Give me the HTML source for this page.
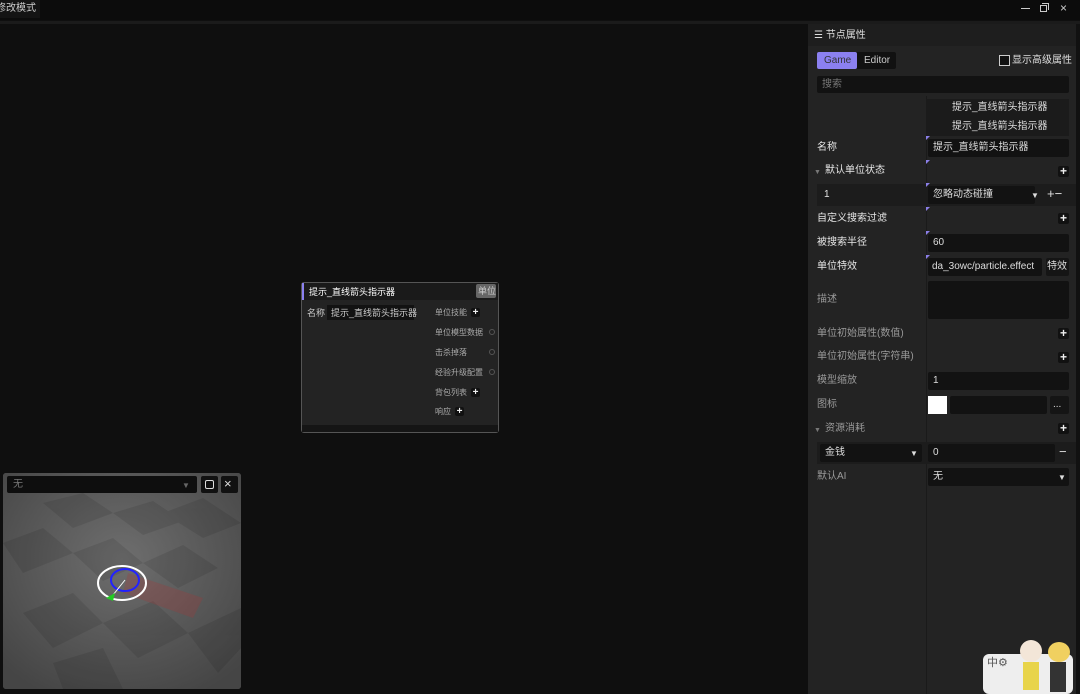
<!DOCTYPE html>
<html><head><meta charset="utf-8"><style>
*{margin:0;padding:0;box-sizing:border-box}
body{width:1080px;height:694px;background:#0f0f0f;overflow:hidden;position:relative;font-family:"Liberation Sans","Noto Sans CJK SC",sans-serif;color:#ddd;font-size:10px;line-height:14px}
.a{position:absolute}
.t{position:absolute;white-space:nowrap}
.in{position:absolute;background:#121212;border-radius:2px}
.plus{position:absolute;width:11px;height:11px;background:#111;color:#eee;font-size:12px;line-height:10px;text-align:center;border-radius:2px;font-weight:bold}
.mk{position:absolute;width:0;height:0;border-top:4px solid #8b7fe8;border-right:4px solid transparent}
.lab{position:absolute;left:817px;font-size:10px;color:#e6e6e6;white-space:nowrap}
.dim{color:#9a9a9a}
</style></head><body>
<div class="a" style="left:0;top:0;width:1080px;height:20px;background:#0c0c0c"></div>
<div class="a" style="left:0;top:0;width:40px;height:18px;background:#141414"></div>
<div class="t" style="left:-4px;top:2px;font-size:10px;color:#ccc">修改模式</div>
<div class="a" style="left:0;top:21px;width:1080px;height:3px;background:#1b1b1b"></div>
<div class="a" style="left:1021px;top:8px;width:9px;height:1px;background:#ccc"></div>
<div class="a" style="left:1040px;top:5px;width:7px;height:7px;border:1px solid #ccc"></div>
<div class="a" style="left:1042px;top:3px;width:7px;height:7px;border-top:1px solid #ccc;border-right:1px solid #ccc"></div>
<div class="t" style="left:1060px;top:1px;font-size:12px;color:#ccc">×</div>

<div class="a" style="left:808px;top:24px;width:272px;height:670px;background:#232323"></div>
<div class="a" style="left:808px;top:24px;width:272px;height:22px;background:#1e1e1e"></div>
<div class="a" style="left:926px;top:96px;width:1px;height:598px;background:#1a1a1a"></div>
<div class="t" style="left:814px;top:29px;font-size:10px;color:#ddd">☰ 节点属性</div>
<div class="a" style="left:817px;top:52px;width:79px;height:17px;background:#111;border-radius:2px"></div>
<div class="a" style="left:817px;top:52px;width:40px;height:17px;background:#8b80f0;border-radius:2px"></div>
<div class="t" style="left:824px;top:54px;color:#333">Game</div>
<div class="t" style="left:864px;top:54px;color:#ccc">Editor</div>
<div class="a" style="left:999px;top:55px;width:11px;height:11px;border:1px solid #ccc;background:#111"></div>
<div class="t" style="left:1012px;top:54px;color:#ddd">显示高级属性</div>
<div class="in" style="left:817px;top:76px;width:252px;height:17px"></div>
<div class="t dim" style="left:822px;top:78px;color:#777">搜索</div>
<div class="a" style="left:926px;top:99px;width:143px;height:37px;background:#1b1b1b"></div>
<div class="t" style="left:952px;top:101px">提示_直线箭头指示器</div>
<div class="t" style="left:952px;top:120px">提示_直线箭头指示器</div>

<div class="mk" style="left:926px;top:136px"></div>
<div class="lab" style="top:141px">名称</div>
<div class="in" style="left:928px;top:139px;width:141px;height:18px"></div>
<div class="t" style="left:933px;top:141px">提示_直线箭头指示器</div>

<div class="mk" style="left:926px;top:160px"></div>
<div class="t" style="left:814px;top:166px;font-size:7px;color:#777">▼</div>
<div class="lab" style="left:825px;top:164px">默认单位状态</div>
<div class="plus" style="left:1058px;top:166px">+</div>

<div class="a" style="left:817px;top:184px;width:262px;height:22px;background:#1c1c1c"></div>
<div class="mk" style="left:926px;top:183px"></div>
<div class="lab" style="left:824px;top:188px">1</div>
<div class="in" style="left:928px;top:186px;width:107px;height:18px"></div>
<div class="t" style="left:933px;top:188px">忽略动态碰撞</div>
<div class="t" style="left:1031px;top:189px;font-size:8px;color:#ddd">▼</div>
<div class="t" style="left:1047px;top:187px;font-size:13px;color:#ddd">+−</div>

<div class="mk" style="left:926px;top:207px"></div>
<div class="lab" style="top:212px">自定义搜索过滤</div>
<div class="plus" style="left:1058px;top:213px">+</div>

<div class="mk" style="left:926px;top:231px"></div>
<div class="lab" style="top:236px">被搜索半径</div>
<div class="in" style="left:928px;top:234px;width:141px;height:18px"></div>
<div class="t" style="left:933px;top:236px">60</div>

<div class="mk" style="left:926px;top:255px"></div>
<div class="lab" style="top:260px">单位特效</div>
<div class="in" style="left:928px;top:258px;width:114px;height:18px"></div>
<div class="t" style="left:932px;top:260px">da_3owc/particle.effect</div>
<div class="in" style="left:1046px;top:258px;width:23px;height:18px;background:#151515"></div>
<div class="t" style="left:1047px;top:260px">特效</div>

<div class="lab dim" style="top:293px">描述</div>
<div class="in" style="left:928px;top:281px;width:141px;height:38px"></div>
<div class="lab dim" style="top:327px">单位初始属性(数值)</div>
<div class="plus" style="left:1058px;top:328px">+</div>
<div class="lab dim" style="top:350px">单位初始属性(字符串)</div>
<div class="plus" style="left:1058px;top:352px">+</div>
<div class="lab dim" style="top:374px">模型缩放</div>
<div class="in" style="left:928px;top:372px;width:141px;height:18px"></div>
<div class="t" style="left:933px;top:374px">1</div>
<div class="lab dim" style="top:398px">图标</div>
<div class="a" style="left:928px;top:396px;width:19px;height:18px;background:#fff"></div>
<div class="in" style="left:950px;top:396px;width:97px;height:18px"></div>
<div class="in" style="left:1050px;top:396px;width:19px;height:18px;background:#151515"></div>
<div class="t" style="left:1053px;top:398px">...</div>
<div class="t" style="left:814px;top:424px;font-size:7px;color:#777">▼</div>
<div class="lab dim" style="left:825px;top:422px">资源消耗</div>
<div class="plus" style="left:1058px;top:423px">+</div>
<div class="a" style="left:817px;top:442px;width:262px;height:22px;background:#1c1c1c"></div>
<div class="in" style="left:820px;top:444px;width:102px;height:18px"></div>
<div class="t" style="left:825px;top:446px">金钱</div>
<div class="t" style="left:910px;top:447px;font-size:8px">▼</div>
<div class="in" style="left:928px;top:444px;width:127px;height:18px"></div>
<div class="t" style="left:933px;top:446px">0</div>
<div class="t" style="left:1059px;top:445px;font-size:13px">−</div>
<div class="lab dim" style="top:470px">默认AI</div>
<div class="in" style="left:928px;top:468px;width:141px;height:18px"></div>
<div class="t" style="left:933px;top:470px">无</div>
<div class="t" style="left:1058px;top:471px;font-size:8px">▼</div>
<div class="a" style="left:1076px;top:24px;width:4px;height:670px;background:#111"></div>

<div class="a" style="left:301px;top:282px;width:198px;height:151px;background:#232323;border:1px solid #555;border-radius:3px"></div>
<div class="a" style="left:302px;top:283px;width:196px;height:17px;background:#1a1a1a"></div>
<div class="a" style="left:302px;top:283px;width:2px;height:17px;background:#8b80f0"></div>
<div class="t" style="left:309px;top:285px;font-size:9px;color:#fff">提示_直线箭头指示器</div>
<div class="a" style="left:476px;top:284px;width:20px;height:14px;background:#666;border-radius:2px"></div>
<div class="t" style="left:478px;top:284px;font-size:9px;color:#ccc">单位</div>
<div class="t" style="left:307px;top:306px;font-size:9px;color:#ccc">名称</div>
<div class="a" style="left:327px;top:305px;width:87px;height:15px;background:#121212"></div>
<div class="t" style="left:331px;top:306px;font-size:9px;color:#ccc">提示_直线箭头指示器</div>
<div class="t" style="left:435px;top:306px;font-size:8px;color:#aaa">单位技能</div>
<div class="plus" style="left:471px;top:308px;width:9px;height:9px;font-size:10px;line-height:9px">+</div>
<div class="t" style="left:435px;top:326px;font-size:8px;color:#aaa">单位模型数据</div>
<div class="a" style="left:489px;top:329px;width:6px;height:6px;border:1px solid #555;border-radius:50%"></div>
<div class="t" style="left:435px;top:346px;font-size:8px;color:#aaa">击杀掉落</div>
<div class="a" style="left:489px;top:349px;width:6px;height:6px;border:1px solid #555;border-radius:50%"></div>
<div class="t" style="left:435px;top:366px;font-size:8px;color:#aaa">经验升级配置</div>
<div class="a" style="left:489px;top:369px;width:6px;height:6px;border:1px solid #555;border-radius:50%"></div>
<div class="t" style="left:435px;top:386px;font-size:8px;color:#aaa">背包列表</div>
<div class="plus" style="left:471px;top:388px;width:9px;height:9px;font-size:10px;line-height:9px">+</div>
<div class="t" style="left:435px;top:405px;font-size:8px;color:#aaa">响应</div>
<div class="plus" style="left:455px;top:407px;width:9px;height:9px;font-size:10px;line-height:9px">+</div>
<div class="a" style="left:302px;top:425px;width:196px;height:7px;background:#151515"></div>

<div class="a" style="left:3px;top:473px;width:238px;height:216px;background:#555;border-radius:3px;overflow:hidden">
<svg width="238" height="216" style="position:absolute;left:0;top:0">
<defs><radialGradient id="g" cx="50%" cy="40%" r="70%"><stop offset="0" stop-color="#6e6e6e"/><stop offset="1" stop-color="#454545"/></radialGradient></defs>
<rect width="238" height="216" fill="url(#g)"/>
<g fill="#000" opacity="0.09">
<polygon points="40,30 80,20 110,40 70,55"/><polygon points="110,40 150,28 180,48 140,62"/>
<polygon points="0,70 40,55 70,80 20,100"/><polygon points="70,80 110,65 140,90 100,108"/>
<polygon points="140,90 180,72 215,95 175,115"/><polygon points="20,140 70,120 100,150 50,175"/>
<polygon points="100,150 150,128 185,160 135,185"/><polygon points="185,160 238,135 238,175 215,200"/>
<polygon points="50,190 100,175 120,216 60,216"/><polygon points="160,40 200,25 238,50 200,65"/>
</g>
<polygon points="125,100 200,125 190,145 120,120" fill="#a33" opacity="0.25"/>
<ellipse cx="119" cy="110" rx="24" ry="17" fill="none" stroke="#fff" stroke-width="2"/>
<ellipse cx="122" cy="107" rx="14" ry="11" fill="none" stroke="#22f" stroke-width="2"/>
<line x1="110" y1="122" x2="122" y2="107" stroke="#fff" stroke-width="1"/>
<polygon points="103,125 112,120 110,128" fill="#2c2"/>
</svg>
<div class="a" style="left:4px;top:3px;width:190px;height:17px;background:#0e0e0e;border-radius:2px"></div>
<div class="t" style="left:10px;top:5px;color:#777">无</div>
<div class="t" style="left:179px;top:6px;font-size:8px;color:#666">▼</div>
<div class="a" style="left:198px;top:3px;width:17px;height:17px;background:#111;border-radius:2px"></div>
<div class="a" style="left:202px;top:7px;width:9px;height:9px;border:1.5px solid #ddd;border-radius:2px"></div>
<div class="a" style="left:218px;top:3px;width:17px;height:17px;background:#111;border-radius:2px"></div>
<div class="t" style="left:221px;top:4px;font-size:13px;color:#ddd">×</div>
</div>

<div class="a" style="left:983px;top:654px;width:90px;height:40px;background:#eee;border-radius:6px"></div>
<div class="t" style="left:987px;top:656px;font-size:11px;color:#555">中⚙</div>
<div class="a" style="left:1020px;top:640px;width:22px;height:22px;background:#f3e6d8;border-radius:50%"></div>
<div class="a" style="left:1023px;top:662px;width:16px;height:28px;background:#e8d44a"></div>
<div class="a" style="left:1048px;top:642px;width:22px;height:20px;background:#f0d060;border-radius:50%"></div>
<div class="a" style="left:1050px;top:662px;width:16px;height:30px;background:#333"></div>
</body></html>
